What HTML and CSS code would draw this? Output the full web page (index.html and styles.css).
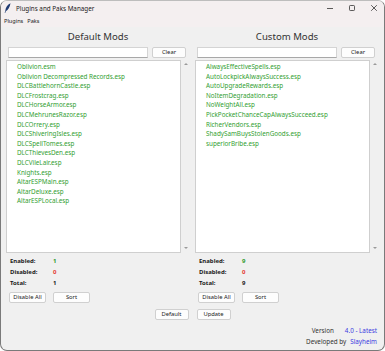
FILE: index.html
```html
<!DOCTYPE html>
<html lang="en">
<head>
    <meta charset="UTF-8">
    <meta name="viewport" content="width=device-width, initial-scale=1.0">
    <title>Plugins and Paks Manager</title>
    <link rel="stylesheet" href="styles.css">
</head>
<body>
    <div class="window">
        <div class="titlebar">
            <svg class="app-icon" width="7" height="10" viewBox="0 0 7 10">
                <path d="M6.5 0.3 C3.5 1.5 1.6 4.5 1.2 8.2 L0.6 9.8 L1.4 9.8 L1.8 8.3 C4.2 7.2 5.8 4 6.5 0.3 Z" fill="#1f3b73"/>
            </svg>
            <span class="title">Plugins and Paks Manager</span>
            <div class="controls">
                <svg width="8" height="8" viewBox="0 0 8 8"><line x1="1" y1="4.5" x2="7" y2="4.5" stroke="#333" stroke-width="0.8"/></svg>
                <svg width="8" height="8" viewBox="0 0 8 8"><rect x="1.5" y="1.5" width="5" height="5" rx="0.8" fill="none" stroke="#333" stroke-width="0.8"/></svg>
                <svg width="8" height="8" viewBox="0 0 8 8"><path d="M1.2 1.2 L6.8 6.8 M6.8 1.2 L1.2 6.8" stroke="#333" stroke-width="0.8"/></svg>
            </div>
        </div>
        <div class="menubar">
            <span class="menu-item active">Plugins</span>
            <span class="menu-item">Paks</span>
        </div>

        <div class="columns">
            <div class="panel">
                <div class="heading">Default Mods</div>
                <div class="search-row">
                    <div class="entry"></div>
                    <div class="btn clear">Clear</div>
                </div>
                <div class="list-frame">
                    <ul class="listbox">
                        <li>Oblivion.esm</li>
                        <li>Oblivion Decompressed Records.esp</li>
                        <li>DLCBattlehornCastle.esp</li>
                        <li>DLCFrostcrag.esp</li>
                        <li>DLCHorseArmor.esp</li>
                        <li>DLCMehrunesRazor.esp</li>
                        <li>DLCOrrery.esp</li>
                        <li>DLCShiveringIsles.esp</li>
                        <li>DLCSpellTomes.esp</li>
                        <li>DLCThievesDen.esp</li>
                        <li>DLCVileLair.esp</li>
                        <li>Knights.esp</li>
                        <li>AltarESPMain.esp</li>
                        <li>AltarDeluxe.esp</li>
                        <li>AltarESPLocal.esp</li>
                    </ul>
                    <div class="scrollbar">
                        <span class="arrow up"></span>
                        <span class="arrow down"></span>
                    </div>
                </div>
                <div class="stats">
                    <div class="stat"><span class="stat-label">Enabled:</span><span class="stat-value on">1</span></div>
                    <div class="stat"><span class="stat-label">Disabled:</span><span class="stat-value off">0</span></div>
                    <div class="stat"><span class="stat-label">Total:</span><span class="stat-value">1</span></div>
                </div>
                <div class="btn-row">
                    <div class="btn wide">Disable All</div>
                    <div class="btn wide">Sort</div>
                </div>
            </div>

            <div class="panel">
                <div class="heading">Custom Mods</div>
                <div class="search-row">
                    <div class="entry"></div>
                    <div class="btn clear">Clear</div>
                </div>
                <div class="list-frame">
                    <ul class="listbox">
                        <li>AlwaysEffectiveSpells.esp</li>
                        <li>AutoLockpickAlwaysSuccess.esp</li>
                        <li>AutoUpgradeRewards.esp</li>
                        <li>NoItemDegradation.esp</li>
                        <li>NoWeightAll.esp</li>
                        <li>PickPocketChanceCapAlwaysSucceed.esp</li>
                        <li>RicherVendors.esp</li>
                        <li>ShadySamBuysStolenGoods.esp</li>
                        <li>superiorBribe.esp</li>
                    </ul>
                    <div class="scrollbar">
                        <span class="arrow up"></span>
                        <span class="arrow down"></span>
                    </div>
                </div>
                <div class="stats">
                    <div class="stat"><span class="stat-label">Enabled:</span><span class="stat-value on">9</span></div>
                    <div class="stat"><span class="stat-label">Disabled:</span><span class="stat-value off">0</span></div>
                    <div class="stat"><span class="stat-label">Total:</span><span class="stat-value">9</span></div>
                </div>
                <div class="btn-row">
                    <div class="btn wide">Disable All</div>
                    <div class="btn wide">Sort</div>
                </div>
            </div>
        </div>

        <div class="bottom-row">
            <div class="btn">Default</div>
            <div class="btn">Update</div>
        </div>

        <div class="info">
            <div class="info-row"><span>Version</span><span class="link ver">4.0 - Latest</span></div>
            <div class="info-row"><span>Developed by</span><span class="link dev">Slayheim</span></div>
        </div>
    </div>
</body>
</html>
```

FILE: styles.css
```css
*{
    box-sizing: border-box;
}
body{
    margin: 0;
    font-family: "Noto Sans", "Open Sans", sans-serif;
    color: #1a1a1a;
}
.window{
    width: 385px;
    height: 351px;
    background-color: #f0f0f0;
    border: 1px solid #7a7a7a;
    border-top-color: #bdbdbd;
    border-radius: 7px;
    overflow: hidden;
}
.titlebar{
    height: 14px;
    display: flex;
    align-items: center;
    background-color: #f4eff0;
    font-size: 6.3px;
}
.app-icon{
    margin-left: 3px;
}
.title{
    margin-left: 5px;
}
.controls{
    margin-left: auto;
    display: flex;
    gap: 14px;
    margin-right: 6px;
}
.menubar{
    height: 12px;
    display: flex;
    align-items: center;
    background-color: #f4eff0;
    font-size: 5.6px;
}
.menu-item{
    padding: 0 2px;
}
.menu-item.active{
    margin-left: 1px;
}

.columns{
    display: grid;
    grid-template-columns: 184px 184px;
    column-gap: 5px;
    padding-left: 5px;
}
.heading{
    height: 16px;
    margin-top: 2px;
    line-height: 16px;
    text-align: center;
    font-size: 9.6px;
    color: #333;
}
.search-row{
    display: flex;
    gap: 4px;
    padding-left: 2px;
    margin-top: 2px;
    height: 11px;
}
.entry{
    width: 140px;
    background-color: #fff;
    border: 1px solid #d4d4d4;
    border-bottom-color: #a8a8a8;
}
.btn{
    height: 11px;
    background-color: #fdfdfd;
    border: 1px solid #d0d0d0;
    border-radius: 2px;
    font-size: 5.8px;
    line-height: 9px;
    text-align: center;
    color: #222;
}
.clear{
    width: 34px;
}
.list-frame{
    display: flex;
    height: 193px;
    margin-top: 2px;
}
.listbox{
    width: 175px;
    margin: 0;
    padding: 1px 0 0 10px;
    list-style: none;
    background-color: #fff;
    border: 1px solid #cfcfcf;
    font-size: 6.3px;
    line-height: 9.6px;
    color: #32a032;
}
.scrollbar{
    width: 9px;
    position: relative;
}
.arrow{
    position: absolute;
    left: 3px;
    width: 0;
    height: 0;
    border-left: 2px solid transparent;
    border-right: 2px solid transparent;
}
.arrow.up{
    top: 3px;
    border-bottom: 2px solid #9a9a9a;
}
.arrow.down{
    bottom: 4px;
    border-top: 2px solid #9a9a9a;
}
.stats{
    margin-top: 3px;
    padding-left: 4px;
}
.stat{
    display: flex;
    height: 11px;
    line-height: 11px;
    font-size: 6px;
    font-weight: bold;
}
.stat-label{
    width: 43px;
}
.stat-value.on{
    color: #2e9a2e;
}
.stat-value.off{
    color: #e53b2f;
}
.btn-row{
    display: flex;
    gap: 7px;
    margin-top: 3px;
    padding-left: 3px;
}
.wide{
    width: 37px;
}

.bottom-row{
    display: flex;
    justify-content: center;
    gap: 8px;
    margin-top: 6px;
}
.bottom-row .btn{
    width: 34px;
}
.info{
    margin-top: 5px;
    padding-right: 7px;
    font-size: 6.3px;
    color: #333;
}
.info-row{
    display: flex;
    justify-content: flex-end;
    height: 11px;
    line-height: 11px;
}
.link{
    color: #3b3be0;
}
.ver{
    margin-left: 11px;
}
.dev{
    margin-left: 4px;
}
```
